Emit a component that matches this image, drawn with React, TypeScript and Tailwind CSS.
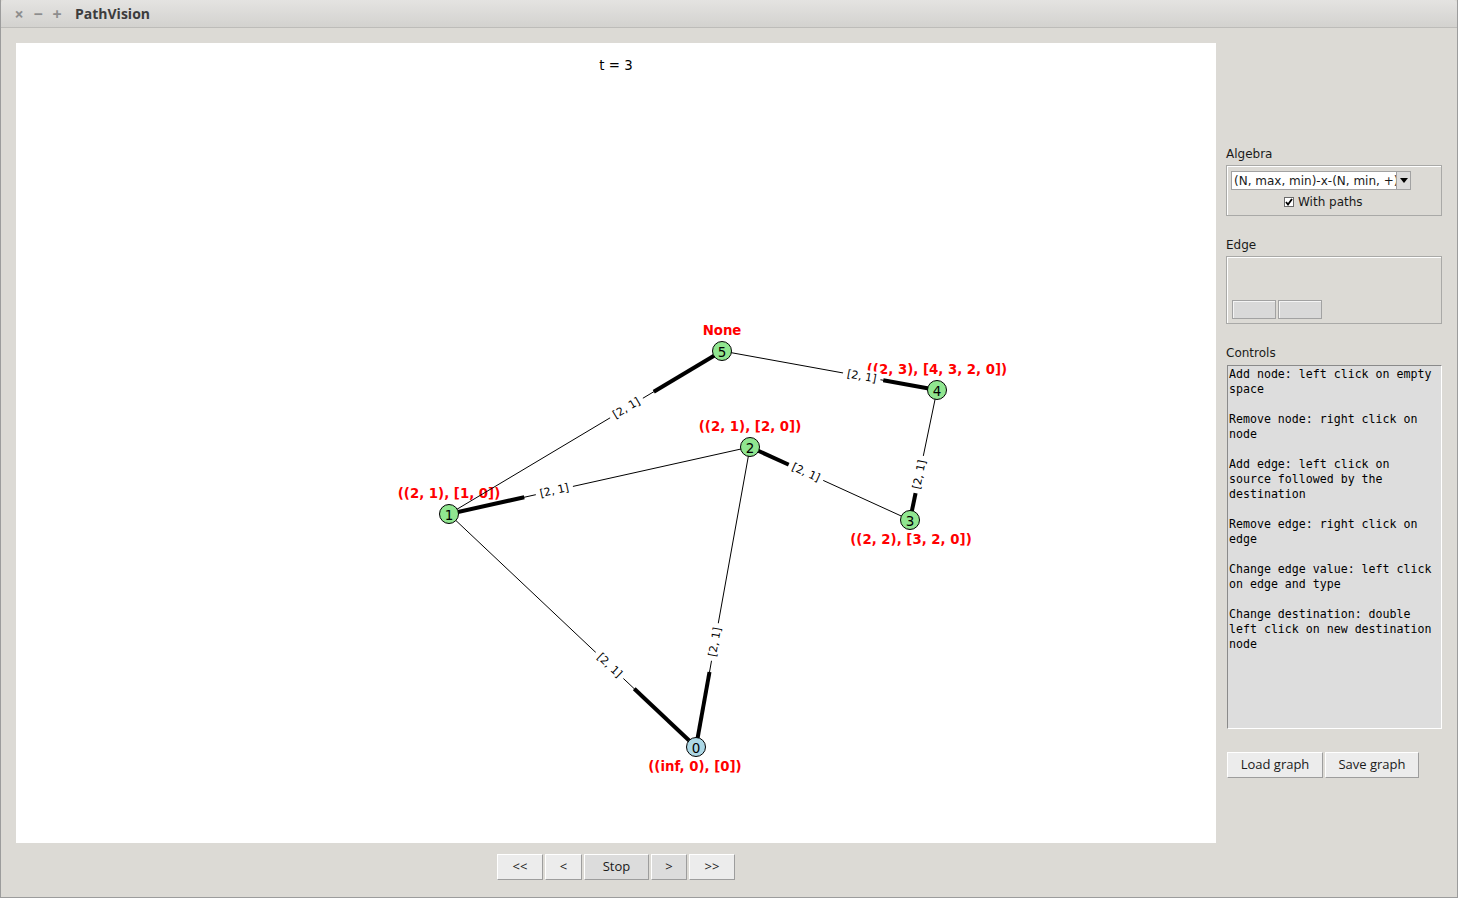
import React from "react";

const NODES = [
  { id: 0, x: 680, y: 704, fill: "#add8e6" },
  { id: 1, x: 433, y: 471, fill: "#90e690" },
  { id: 2, x: 734, y: 404, fill: "#90e690" },
  { id: 3, x: 894, y: 477, fill: "#90e690" },
  { id: 4, x: 921, y: 347, fill: "#90e690" },
  { id: 5, x: 706, y: 308, fill: "#90e690" },
];

// source -> target; thick stub drawn at the target end
const EDGES: [number, number][] = [
  [1, 5],
  [2, 1],
  [3, 2],
  [5, 4],
  [4, 3],
  [1, 0],
  [2, 0],
];

const RESULTS = [
  { text: "None", x: 706, y: 287 },
  { text: "((2, 3), [4, 3, 2, 0])", x: 921, y: 326 },
  { text: "((2, 1), [2, 0])", x: 734, y: 383 },
  { text: "((2, 1), [1, 0])", x: 433, y: 450 },
  { text: "((2, 2), [3, 2, 0])", x: 895, y: 496 },
  { text: "((inf, 0), [0])", x: 679, y: 723 },
];

const CONTROLS = [
  "Add node: left click on empty",
  "space",
  "",
  "Remove node: right click on",
  "node",
  "",
  "Add edge: left click on",
  "source followed by the",
  "destination",
  "",
  "Remove edge: right click on",
  "edge",
  "",
  "Change edge value: left click",
  "on edge and type",
  "",
  "Change destination: double",
  "left click on new destination",
  "node",
];

const node = (id: number) => NODES.find((n) => n.id === id)!;

function Graph() {
  return (
    <svg width={1200} height={800} className="block" style={{ fontFamily: "'DejaVu Sans', sans-serif" }}>
      <text x={600} y={22} fontSize={13.3} textAnchor="middle" dominantBaseline="central" fill="#000">
        t = 3
      </text>

      {RESULTS.map((r) => (
        <text
          key={r.text}
          x={r.x}
          y={r.y}
          fontSize={13.3}
          fontWeight="bold"
          fill="#ff0000"
          textAnchor="middle"
          dominantBaseline="central"
        >
          {r.text}
        </text>
      ))}

      {EDGES.map(([s, t]) => {
        const a = node(s);
        const b = node(t);
        const sx = b.x + 0.25 * (a.x - b.x);
        const sy = b.y + 0.25 * (a.y - b.y);
        return (
          <g key={`e${s}${t}`}>
            <line x1={a.x} y1={a.y} x2={b.x} y2={b.y} stroke="#000" strokeWidth={1} />
            <line x1={sx} y1={sy} x2={b.x} y2={b.y} stroke="#000" strokeWidth={4} />
          </g>
        );
      })}

      {EDGES.map(([s, t]) => {
        const a = node(s);
        const b = node(t);
        const lx = a.x + 0.65 * (b.x - a.x);
        const ly = a.y + 0.65 * (b.y - a.y);
        let ang = (Math.atan2(b.y - a.y, b.x - a.x) * 180) / Math.PI;
        if (ang > 90) ang -= 180;
        if (ang < -90) ang += 180;
        return (
          <g key={`l${s}${t}`} transform={`translate(${lx},${ly}) rotate(${ang})`}>
            <rect x={-19} y={-7} width={38} height={14} fill="#fff" />
            <text fontSize={11} textAnchor="middle" dominantBaseline="central" fill="#000">
              [2, 1]
            </text>
          </g>
        );
      })}

      {NODES.map((n) => (
        <g key={`n${n.id}`}>
          <circle cx={n.x} cy={n.y} r={9.5} fill={n.fill} stroke="#000" strokeWidth={1} />
          <text x={n.x} y={n.y + 0.5} fontSize={13.5} textAnchor="middle" dominantBaseline="central" fill="#000">
            {n.id}
          </text>
        </g>
      ))}
    </svg>
  );
}

function TkButton({ label, w, dark }: { label: string; w: string; dark?: boolean }) {
  return (
    <div
      className={`${w} h-full flex items-center justify-center border border-t-white border-l-white border-b-[#9d9d9d] border-r-[#9d9d9d] text-[13px] text-[#1a1a1a] ${
        dark ? "bg-[#dcdcdc]" : "bg-[#ececec]"
      }`}
    >
      {label}
    </div>
  );
}

const dejavu = { fontFamily: "'DejaVu Sans', sans-serif" };

export default function App() {
  return (
    <div
      className="w-[1458px] h-[898px] flex flex-col bg-[#dcdad5] border-x border-b border-[#9c9c9c] overflow-hidden"
      style={{ fontFamily: "'Open Sans', 'Noto Sans', sans-serif" }}
    >
      {/* title bar */}
      <div className="h-[28px] shrink-0 flex items-center bg-gradient-to-b from-[#e4e3e1] to-[#d3d2cf] border-b border-[#bdbcb9] rounded-t-[4px]">
        <div className="flex items-center gap-[7px] pl-[12px] text-[#8d8d8d] text-[16px] font-bold leading-none">
          <span className="w-[12px] text-center">×</span>
          <span className="w-[12px] text-center">−</span>
          <span className="w-[12px] text-center">+</span>
        </div>
        <span className="ml-[12px] text-[14px] font-bold text-[#3c3c3c]">PathVision</span>
      </div>

      <div className="flex flex-1">
        {/* plot + navigation */}
        <div className="flex flex-col pl-[15px] pt-[15px]">
          <div className="w-[1200px] h-[800px] bg-white">
            <Graph />
          </div>
          <div className="flex justify-center gap-[2px] mt-[11px] h-[26px]">
            <TkButton label="<<" w="w-[46px]" />
            <TkButton label="<" w="w-[37px]" />
            <TkButton label="Stop" w="w-[65px]" dark />
            <TkButton label=">" w="w-[36px]" dark />
            <TkButton label=">>" w="w-[46px]" />
          </div>
        </div>

        {/* side panel */}
        <div className="ml-[10px] w-[216px] flex flex-col pt-[117px] text-[12px] text-[#1a1a1a]">
          <div className="h-[16px] pt-[1px] leading-[16px]" style={dejavu}>Algebra</div>
          <div className="mt-[4px] h-[51px] border border-[#a9a9a7] shadow-[inset_1px_1px_0_#fff] px-[4px] pt-[5px] flex flex-col" style={dejavu}>
            <div className="flex h-[19px] w-[180px]">
              <div className="flex-1 bg-white border border-[#a2a2a2] overflow-hidden whitespace-nowrap leading-[17px] pt-[1px] pl-[2px]">
                (N, max, min)-x-(N, min, +)
              </div>
              <div className="w-[14px] bg-[#dcdcdc] border border-[#a2a2a2] border-l-0 flex items-center justify-center">
                <svg width="8" height="5" viewBox="0 0 8 5">
                  <path d="M0 0 H8 L4 5 Z" fill="#000" />
                </svg>
              </div>
            </div>
            <div className="flex items-center mt-[6px] pl-[53px] gap-[4px] h-[12px]">
              <div className="w-[10px] h-[10px] bg-white border border-[#6a6a6a] flex items-center justify-center">
                <svg width="8" height="8" viewBox="0 0 8 8">
                  <path d="M1 4 L3 6.5 L7 1" fill="none" stroke="#000" strokeWidth="1.8" />
                </svg>
              </div>
              <span className="leading-[12px]">With paths</span>
            </div>
          </div>

          <div className="mt-[20px] h-[16px] pt-[1px] leading-[16px]" style={dejavu}>Edge</div>
          <div className="mt-[4px] h-[68px] border border-[#a9a9a7] shadow-[inset_1px_1px_0_#fff] flex items-end pl-[5px] pb-[4px] gap-[2px]">
            <div className="w-[44px] h-[19px] bg-[#d9d9d9] border border-[#a2a2a2] shadow-[inset_1px_1px_0_#f4f4f4]" />
            <div className="w-[44px] h-[19px] bg-[#d9d9d9] border border-[#a2a2a2] shadow-[inset_1px_1px_0_#f4f4f4]" />
          </div>

          <div className="mt-[20px] h-[16px] pt-[1px] leading-[16px]" style={dejavu}>Controls</div>
          <div
            className="mt-[5px] ml-[1px] w-[215px] h-[364px] bg-[#dddddd] border border-l-[#8a8a8a] border-t-[#8a8a8a] border-r-white border-b-white pl-[1px] pt-[1px] text-[11.6px] leading-[15px] text-black whitespace-pre"
            style={{ fontFamily: "'DejaVu Sans Mono', monospace" }}
          >
            {CONTROLS.map((l, i) => (
              <div key={i} className="h-[15px]">
                {l}
              </div>
            ))}
          </div>

          <div className="mt-[23px] ml-[1px] flex gap-[2px] h-[26px]">
            <TkButton label="Load graph" w="w-[96px]" />
            <TkButton label="Save graph" w="w-[94px]" />
          </div>
        </div>
      </div>
    </div>
  );
}
